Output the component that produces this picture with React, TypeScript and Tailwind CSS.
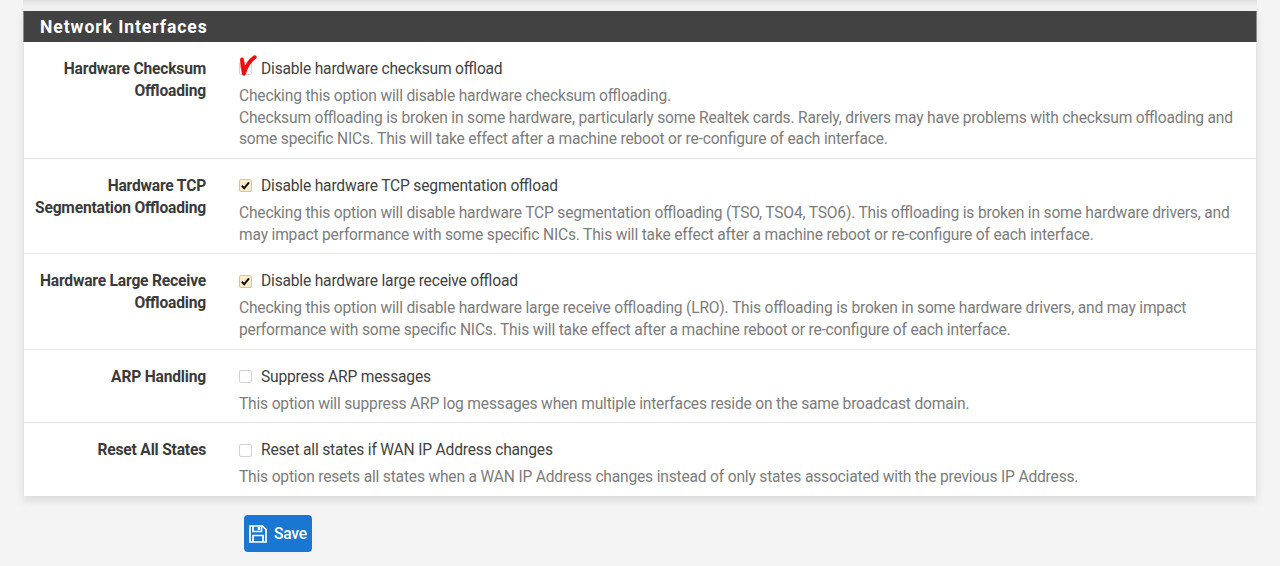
type Row = {
  label: string[];
  option: string;
  help: string[];
  checked?: boolean;
  marked?: boolean;
};

const rows: Row[] = [
  {
    label: ["Hardware Checksum", "Offloading"],
    option: "Disable hardware checksum offload",
    help: [
      "Checking this option will disable hardware checksum offloading.",
      "Checksum offloading is broken in some hardware, particularly some Realtek cards. Rarely, drivers may have problems with checksum offloading and",
      "some specific NICs. This will take effect after a machine reboot or re-configure of each interface.",
    ],
    marked: true,
  },
  {
    label: ["Hardware TCP", "Segmentation Offloading"],
    option: "Disable hardware TCP segmentation offload",
    help: [
      "Checking this option will disable hardware TCP segmentation offloading (TSO, TSO4, TSO6). This offloading is broken in some hardware drivers, and",
      "may impact performance with some specific NICs. This will take effect after a machine reboot or re-configure of each interface.",
    ],
    checked: true,
  },
  {
    label: ["Hardware Large Receive", "Offloading"],
    option: "Disable hardware large receive offload",
    help: [
      "Checking this option will disable hardware large receive offloading (LRO). This offloading is broken in some hardware drivers, and may impact",
      "performance with some specific NICs. This will take effect after a machine reboot or re-configure of each interface.",
    ],
    checked: true,
  },
  {
    label: ["ARP Handling"],
    option: "Suppress ARP messages",
    help: ["This option will suppress ARP log messages when multiple interfaces reside on the same broadcast domain."],
  },
  {
    label: ["Reset All States"],
    option: "Reset all states if WAN IP Address changes",
    help: [
      "This option resets all states when a WAN IP Address changes instead of only states associated with the previous IP Address.",
    ],
  },
];

function Checkbox({ checked, marked }: { checked?: boolean; marked?: boolean }) {
  return (
    <span
      className={`relative mb-[2.5px] block size-[13px] shrink-0 rounded-[2px] border ${
        checked ? "border-[#d3c6a2] bg-[#fdeecb]" : "border-[#d2d2d2] bg-white"
      }`}
    >
      {checked && (
        <svg viewBox="0 0 11 11" className="block size-[11px]" fill="none">
          <path d="M1.8 5.8 4.2 8.2 9 2.3" stroke="#111" strokeWidth="2" />
        </svg>
      )}
      {marked && (
        <svg viewBox="0 0 20 24" className="absolute -left-[1px] -top-[9px] h-6 w-5" fill="none">
          <path
            d="M3 5.5C3.1 11 3.6 15 4.9 19.8C7 13 10 7 15.8 3.2"
            stroke="#f50a0a"
            strokeWidth="3.8"
            strokeLinecap="round"
            strokeLinejoin="round"
          />
          <path d="M3.6 7 5 17.5 8 11.5" stroke="#f50a0a" strokeWidth="3.2" strokeLinejoin="round" />
        </svg>
      )}
    </span>
  );
}

function SettingRow({ row }: { row: Row }) {
  return (
    <div className="flex border-b border-[#e4e4e4] pt-[17.1px] pb-[7.2px] last:border-b-0">
      <div className="w-[182px] shrink-0 text-right font-bold text-[#3a3a3a]">
        {row.label.map((line) => (
          <div key={line} className="whitespace-nowrap">{line}</div>
        ))}
      </div>
      <div className="ml-[33px]">
        <label className="flex items-center text-[#424242]">
          <Checkbox checked={row.checked} marked={row.marked} />
          <span className="ml-[9px]">{row.option}</span>
        </label>
        <div className="mt-[5.1px] text-[#7c7c7c]">
          {row.help.map((line) => (
            <div key={line} className="whitespace-nowrap">{line}</div>
          ))}
        </div>
      </div>
    </div>
  );
}

export default function App() {
  return (
    <div className="h-[566px] overflow-hidden bg-[#f4f4f4] font-['Roboto',sans-serif] text-[15.6px] leading-[21.65px] tracking-[-0.19px] [font-feature-settings:'liga'_1]">
      <div className="mx-[23px] h-[11px] bg-linear-to-b from-[#e0e0e0] to-[#f1f1f1] to-60%" />
      <div className="mx-[23px] border-x border-[#e4e4e4] bg-white shadow-[0_5px_8px_rgba(0,0,0,0.1)]">
        <h2 className="-mx-px flex h-[31px] items-center border-x border-[#8a8a8a] bg-[#424242] pt-[2px] pl-4 text-[17.6px] font-bold tracking-[0.9px] text-white">
          Network Interfaces
        </h2>
        {rows.map((row) => (
          <SettingRow key={row.option} row={row} />
        ))}
      </div>
      <button
        type="button"
        className="mt-[19px] ml-[244px] flex h-[37px] w-[68px] items-center rounded-[4px] bg-[#1976d2] pl-[5px] text-white"
      >
        <svg viewBox="0 0 18 18" className="size-[18px]" fill="none" stroke="currentColor" strokeWidth="1.7">
          <path d="M1 1h12.5L17 4.5V17H1zM4 1v5.5h8.5V1M4 17v-6.5h10V17" />
          <path d="M9.8 2v3.2" strokeWidth="2.2" />
        </svg>
        <span className="ml-[7px] pt-[2px] font-medium">Save</span>
      </button>
    </div>
  );
}
